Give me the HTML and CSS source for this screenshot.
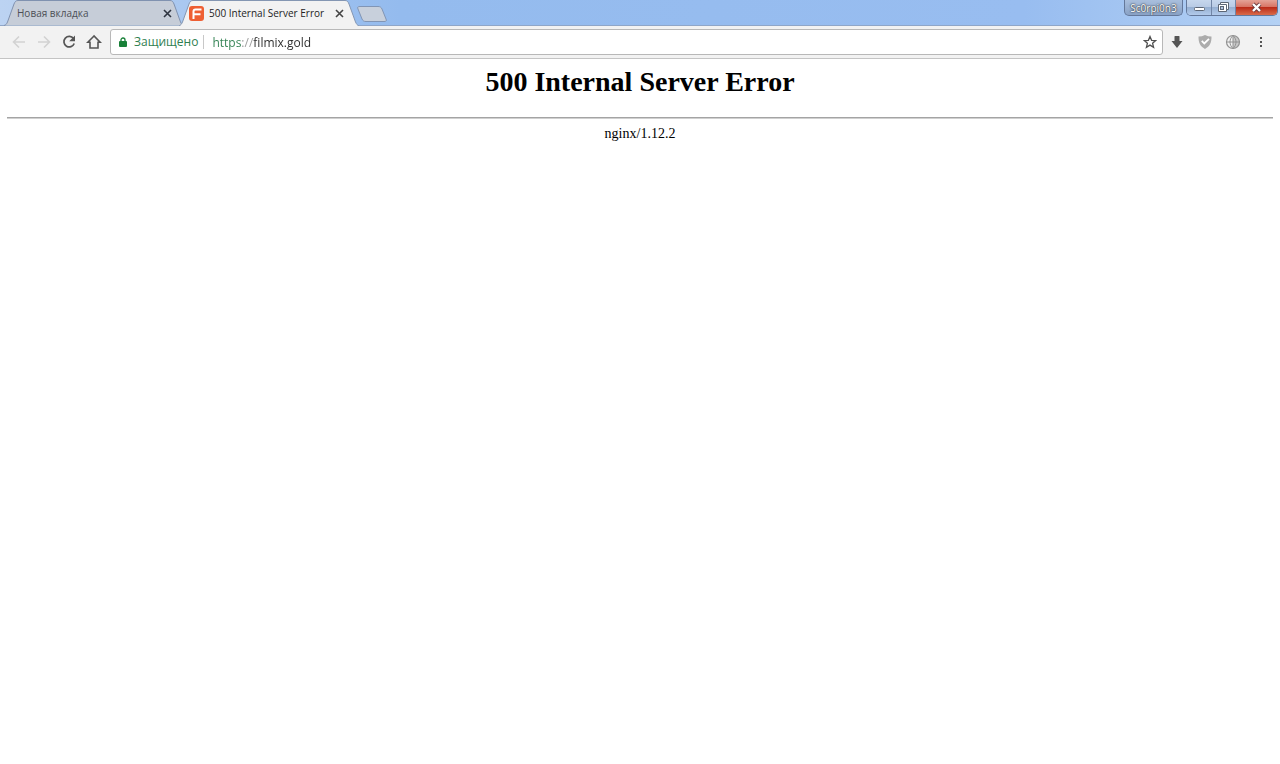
FILE: index.html
```html
<!DOCTYPE html>
<html lang="ru">
<head>
    <meta charset="UTF-8">
    <meta name="viewport" content="width=device-width, initial-scale=1.0">
    <title>500 Internal Server Error</title>
    <link rel="stylesheet" href="styles.css">
</head>
<body>
    <header class="browser">
        <div class="titlebar">
            <div class="tabs">
                <div class="tab">
                    <svg class="tab-shape" viewBox="0 0 180 26" aria-hidden="true">
                        <path d="M0 25.5 C2 25 2.500 24 3.500 22 L10 4 C11 1.5 12 .5 14 .5 H166 C168 .5 169 1.5 170 4 L176.500 22 C177.500 24 178 25 180 25.5" fill="#c6cdd8" stroke="#8092b0"/>
                    </svg>
                    <span class="tab-title">Новая вкладка</span>
                    <button class="tab-close" aria-label="Закрыть вкладку">
                        <svg width="9" height="9" viewBox="0 0 9 9"><path d="M1 1l7 7M8 1l-7 7" stroke="#2e3440" stroke-width="1.6"/></svg>
                    </button>
                </div>
                <div class="tab active">
                    <svg class="tab-shape" viewBox="0 0 180 26" aria-hidden="true">
                        <path d="M0 26 C2 25 2.500 24 3.500 22 L10 4 C11 1.5 12 .5 14 .5 H166 C168 .5 169 1.5 170 4 L176.500 22 C177.500 24 178 25 180 26" fill="#f2f2f2" stroke="#8496b2"/>
                        <path d="M2 26h176" stroke="#f2f2f2" stroke-width="2"/>
                    </svg>
                    <svg class="favicon" width="15" height="15" viewBox="0 0 15 15" aria-hidden="true">
                        <rect width="15" height="15" rx="3" fill="#ee5f33"/>
                        <path d="M4.500 13V5.500Q4.500 3.500 6.500 3.500H12.500M4.500 8.200H11.500" fill="none" stroke="#fff" stroke-width="2"/>
                    </svg>
                    <span class="tab-title">500 Internal Server Error</span>
                    <button class="tab-close" aria-label="Закрыть вкладку">
                        <svg width="9" height="9" viewBox="0 0 9 9"><path d="M1 1l7 7M8 1l-7 7" stroke="#444" stroke-width="1.6"/></svg>
                    </button>
                </div>
                <button class="new-tab" aria-label="Новая вкладка">
                    <svg width="32" height="16" viewBox="0 0 32 16"><path d="M4 .5H22C24 .5 25 1 26 3L30 13C31 15 30 15.500 28 15.500H10C8 15.500 7 15 6 13L2 3C1 1 2 .5 4 .5Z" fill="#c8d0dc" stroke="#8195b5"/></svg>
                </button>
            </div>
            <div class="window-controls">
                <button class="profile">Sc0rpi0n3</button>
                <div class="window-buttons">
                    <button class="win" aria-label="Свернуть">
                        <svg width="24" height="15" viewBox="0 0 24 15"><rect x="7.500" y="7.500" width="10" height="3" rx="1" fill="#fff" stroke="#5c6675"/></svg>
                    </button>
                    <button class="win" aria-label="Развернуть">
                        <svg width="23" height="15" viewBox="0 0 23 15"><path d="M8.500 2.500h8v7h-2v2h-8v-7h2z" fill="#fff" stroke="#5c6675"/><path d="M8.500 4.500h6v5" fill="none" stroke="#5c6675"/><rect x="8.500" y="6.500" width="3" height="3" fill="#b4c5dd" stroke="#5c6675"/></svg>
                    </button>
                    <button class="win close" aria-label="Закрыть">
                        <svg width="41" height="15" viewBox="0 0 41 15"><path d="M17 4l7 7M24 4l-7 7" stroke="#6b3a3d" stroke-width="4"/><path d="M17 4l7 7M24 4l-7 7" stroke="#fff" stroke-width="2.400"/></svg>
                    </button>
                </div>
            </div>
        </div>
        <nav class="toolbar">
            <div class="nav-buttons">
                <button class="icon" aria-label="Назад" disabled>
                    <svg width="16" height="16" viewBox="0 0 16 16"><path d="M14 8H3M8 2.500L2.500 8L8 13.500" fill="none" stroke="#d2d2d2" stroke-width="1.600"/></svg>
                </button>
                <button class="icon" aria-label="Вперёд" disabled>
                    <svg width="16" height="16" viewBox="0 0 16 16"><path d="M2 8h11M8 2.500L13.500 8L8 13.500" fill="none" stroke="#d2d2d2" stroke-width="1.600"/></svg>
                </button>
                <button class="icon" aria-label="Обновить">
                    <svg width="16" height="16" viewBox="0 0 16 16"><path d="M12.500 4.500A5.300 5.300 0 1 0 13.200 9.500" fill="none" stroke="#555" stroke-width="1.700"/><path d="M14 1.500V7.300H8.200z" fill="#555"/></svg>
                </button>
                <button class="icon" aria-label="Главная">
                    <svg width="16" height="16" viewBox="0 0 16 16"><path d="M8 2L1.800 8.300H4V14H12V8.300H14.200Z" fill="none" stroke="#555" stroke-width="1.600"/></svg>
                </button>
            </div>
            <div class="address">
                <svg class="lock" width="8" height="11" viewBox="0 0 8 11" aria-hidden="true"><path d="M2 5V3a2 2 0 0 1 4 0v2" fill="none" stroke="#188038" stroke-width="1.300"/><rect y="4" width="8" height="6" rx="1" fill="#188038"/></svg>
                <label class="secure" for="url">Защищено</label>
                <input class="url" id="url" type="text" value="https://filmix.gold" spellcheck="false">
                <button class="icon star" aria-label="Добавить в закладки">
                    <svg width="14" height="14" viewBox="0 0 14 14"><path d="M7 1.500L8.600 5.300L12.700 5.600L9.600 8.300L10.600 12.300L7 10.100L3.400 12.300L4.400 8.300L1.300 5.600L5.400 5.300Z" fill="none" stroke="#505050" stroke-width="1.300"/></svg>
                </button>
            </div>
            <div class="extensions">
                <button class="icon" aria-label="Загрузки">
                    <svg width="16" height="16" viewBox="0 0 16 16"><path d="M5.500 2.500Q5.500 2 6 2h4q.5 0 .5.500V7H13.500L8 14L2.500 7H5.500Z" fill="#555"/></svg>
                </button>
                <button class="icon" aria-label="Защита">
                    <svg width="16" height="16" viewBox="0 0 16 16"><path d="M8 1Q5 2.500 1.500 2.500C1.500 9 3 12 8 15C13 12 14.500 9 14.500 2.500Q11 2.500 8 1Z" fill="#acacac"/><path d="M4.800 6.800L7.300 9.500L12 4.800" fill="none" stroke="#fff" stroke-width="1.800"/></svg>
                </button>
                <button class="icon" aria-label="Прокси">
                    <svg width="16" height="16" viewBox="0 0 16 16"><path d="M8 1.500a6.500 6.500 0 0 1 0 13z" fill="#c8c8c8"/><circle cx="8" cy="8" r="6.500" fill="none" stroke="#929292" stroke-width="1.200"/><path d="M8 1.500v13M1.500 8h13M8 1.500C4 5 4 11 8 14.500M8 1.500C12 5 12 11 8 14.500" fill="none" stroke="#929292"/></svg>
                </button>
                <button class="icon" aria-label="Меню">
                    <svg width="16" height="16" viewBox="0 0 16 16"><path d="M7 3h2v2H7zM7 7h2v2H7zM7 11h2v2H7z" fill="#555"/></svg>
                </button>
            </div>
        </nav>
    </header>
    <main class="page">
        <h1>500 Internal Server Error</h1>
        <hr>
        <p>nginx/1.12.2</p>
    </main>
</body>
</html>
```
FILE: styles.css
```css
* {
    box-sizing: border-box;
}
body {
    margin: 0;
    background-color: #fff;
    color: #000;
    font-family: "Liberation Serif", "Times New Roman", serif;
}
button, input {
    margin: 0;
    padding: 0;
    border: none;
    background: none;
    font-family: inherit;
}
svg {
    display: block;
}
.browser {
    font-family: "Open Sans", sans-serif;
}
.titlebar {
    display: flex;
    justify-content: space-between;
    height: 26px;
    padding: 0 2px 0 4px;
    background: linear-gradient(90deg, #bcd3f2 0, #94bbee 400px, #98bdf0 80%, #b4d1f4 100%);
    border-bottom: 1px solid #8fa6c8;
}
.tabs {
    display: flex;
}
.tab {
    position: relative;
    display: flex;
    align-items: center;
    width: 180px;
    height: 26px;
    padding: 0 12px 0 13px;
}
.tab.active {
    z-index: 1;
    gap: 5px;
    margin-left: -5px;
    padding-left: 10px;
    padding-right: 15px;
}
.tab-shape {
    position: absolute;
    inset: 0;
    width: 100%;
    height: 100%;
}
.favicon, .tab-title, .tab-close {
    position: relative;
}
.tab-title {
    flex: 1;
    color: #4c4f56;
    font-size: 10px;
    line-height: 16px;
    white-space: nowrap;
}
.active .tab-title {
    color: #222;
}
.new-tab {
    align-self: flex-start;
    margin: 6px 0 0 -3px;
}
.window-controls {
    display: flex;
    align-items: flex-start;
    gap: 3px;
}
.profile, .window-buttons {
    height: 16px;
    border: 1px solid #64789a;
    border-top: none;
    border-radius: 0 0 5px 5px;
    overflow: hidden;
}
.profile {
    width: 59px;
    background: linear-gradient(#a9bfdd, #89a2c6);
    color: #fff;
    font-size: 10px;
    line-height: 14px;
    text-shadow: 0 0 2px #222, 0 0 1px #333;
}
.window-buttons {
    display: flex;
}
.win {
    height: 15px;
    border-right: 1px solid #7085a6;
    background: linear-gradient(#c6d7ed 0, #b7cae4 50%, #96b0d2 50%, #b2caeb 100%);
}
.win.close {
    border-right: none;
    background: linear-gradient(#e4a397 0, #d7705f 50%, #bb2c19 50%, #d96b4a 100%);
}
.toolbar {
    display: flex;
    align-items: center;
    gap: 6px;
    height: 33px;
    padding: 0 11px;
    background-color: #f2f2f2;
    border-bottom: 1px solid #c4c4c4;
}
.nav-buttons {
    display: flex;
    gap: 9px;
    padding-right: 2px;
}
.extensions {
    display: flex;
    gap: 12px;
}
.address {
    display: flex;
    flex: 1;
    align-items: center;
    height: 26px;
    padding: 0 5px 0 8px;
    background-color: #fff;
    border: 1px solid #b8b8b8;
    border-radius: 3px;
}
.secure {
    margin-left: 7px;
    padding-right: 5px;
    border-right: 1px solid #c8c8c8;
    color: #2f8050;
    font-size: 12px;
    line-height: 14px;
}
.url {
    flex: 1;
    min-width: 0;
    height: 20px;
    margin-left: 8px;
    /* scheme in green, slashes in grey, host in black */
    background: linear-gradient(90deg, #2f8050 29px, #999 29px, #999 41px, #2a2a2a 41px);
    -webkit-background-clip: text;
    background-clip: text;
    color: transparent;
    font-size: 12px;
    outline: none;
}
.page {
    padding: 6px 7px 0;
    text-align: center;
}
h1 {
    margin: 0 0 18px;
    font-size: 28px;
    line-height: 34px;
}
hr {
    height: 2px;
    margin: 0;
    border: none;
    border-top: 1px solid #a4a4a4;
    border-bottom: 1px solid #d0d0d0;
}
p {
    margin: 6px 0;
    font-size: 14px;
    line-height: 18px;
}
```
